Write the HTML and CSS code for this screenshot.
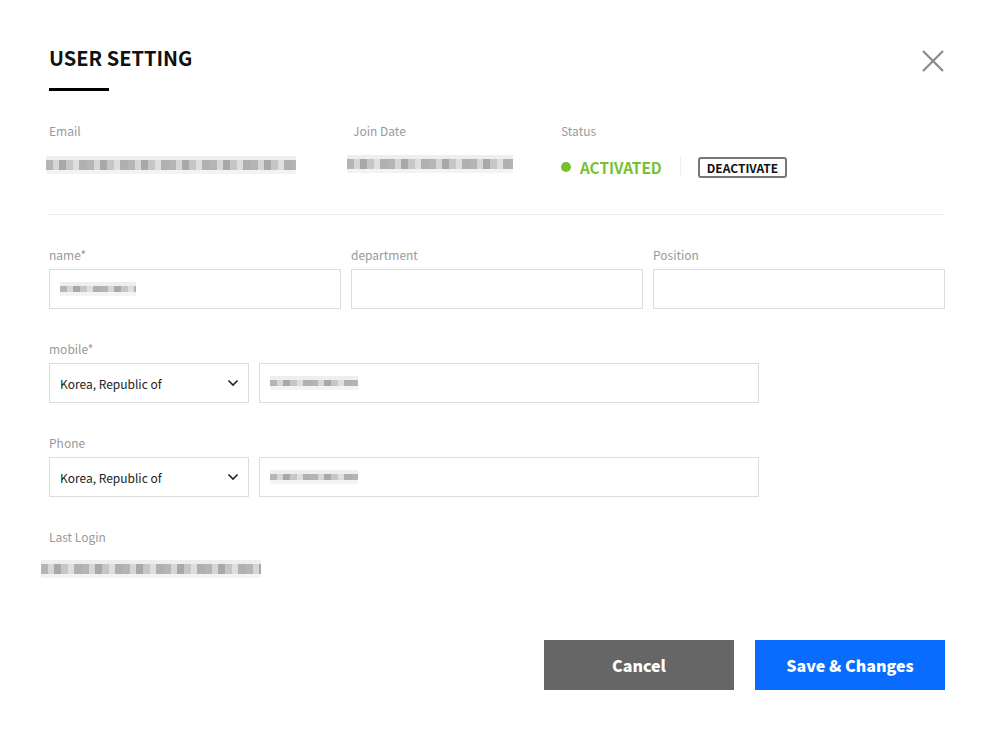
FILE: index.html
```html
<!DOCTYPE html>
<html lang="en">
<head>
<meta charset="utf-8">
<title>User Setting</title>
<link rel="stylesheet" href="styles.css">
</head>
<body>
<div class="modal">
  <div class="header">
    <div class="title-wrap">
      <h1 class="title">USER SETTING</h1>
      <div class="title-bar"></div>
    </div>
    <button class="close" aria-label="Close">
      <svg width="22" height="22" viewBox="0 0 22 22"><path d="M1 1 L21 21 M21 1 L1 21" stroke="#8a8a8a" stroke-width="2.2" fill="none"/></svg>
    </button>
  </div>

  <div class="info">
    <div class="info-col">
      <div class="label">Email</div>
      <div class="value"><span class="blur blur-email"></span></div>
    </div>
    <div class="info-col">
      <div class="label">Join Date</div>
      <div class="value"><span class="blur blur-date"></span></div>
    </div>
    <div class="info-col">
      <div class="label">Status</div>
      <div class="value status">
        <span class="dot"></span>
        <span class="activated">ACTIVATED</span>
        <span class="sep"></span>
        <button class="deactivate">DEACTIVATE</button>
      </div>
    </div>
  </div>

  <div class="divider"></div>

  <div class="field">
    <div class="grid3">
      <div>
        <div class="label">name*</div>
        <div class="input"><span class="blur blur-name"></span></div>
      </div>
      <div>
        <div class="label">department</div>
        <div class="input"></div>
      </div>
      <div>
        <div class="label">Position</div>
        <div class="input"></div>
      </div>
    </div>
  </div>

  <div class="field">
    <div class="label">mobile*</div>
    <div class="phone-row">
      <div class="select">
        <span>Korea, Republic of</span>
        <svg width="12" height="8" viewBox="0 0 12 8"><path d="M1.5 1.5 L6 6 L10.5 1.5" stroke="#222" stroke-width="1.6" fill="none"/></svg>
      </div>
      <div class="input wide"><span class="blur blur-phone"></span></div>
    </div>
  </div>

  <div class="field">
    <div class="label">Phone</div>
    <div class="phone-row">
      <div class="select">
        <span>Korea, Republic of</span>
        <svg width="12" height="8" viewBox="0 0 12 8"><path d="M1.5 1.5 L6 6 L10.5 1.5" stroke="#222" stroke-width="1.6" fill="none"/></svg>
      </div>
      <div class="input wide"><span class="blur blur-phone"></span></div>
    </div>
  </div>

  <div class="field last">
    <div class="label">Last Login</div>
    <div class="value"><span class="blur blur-login"></span></div>
  </div>

  <div class="actions">
    <button class="btn btn-cancel">Cancel</button>
    <button class="btn btn-save">Save &amp; Changes</button>
  </div>
</div>
</body>
</html>
```

FILE: styles.css
```css
* { box-sizing: border-box; }
html, body { margin: 0; padding: 0; background: #fff; }
body {
  font-family: "Noto Sans CJK KR", "Noto Sans", sans-serif;
  color: #222;
}
.modal {
  width: 995px;
  padding: 45px 50px 0 49px;
}
.header {
  display: flex;
  justify-content: space-between;
  align-items: flex-start;
}
.title {
  margin: 0;
  font-size: 20px;
  line-height: 26px;
  font-weight: 700;
  color: #111;
}
.title-bar {
  width: 60px;
  height: 3px;
  background: #000;
  margin-top: 17px;
}
.close {
  border: 0;
  background: none;
  padding: 0;
  margin-top: 5px;
  margin-right: 1px;
  width: 22px;
  height: 22px;
  display: block;
  cursor: pointer;
}
.close svg { display: block; }
.info {
  display: grid;
  grid-template-columns: 304px 208px auto;
  margin-top: 31px;
}
.label {
  font-size: 12px;
  line-height: 18px;
  color: #999;
}
.value {
  margin-top: 17px;
  height: 20px;
  display: flex;
  align-items: center;
}
.blur {
  display: block;
  height: 10px;
  margin-top: -4px;
  background:
    repeating-linear-gradient(90deg, #a9a9a9 0 7px, #cfcfcf 7px 13px, #999 13px 20px, #bdbdbd 20px 27px, #d9d9d9 27px 33px, #a3a3a3 33px 41px);
  box-shadow: 0 -4px 0 #ececec, 0 4px 0 #f1f1f1;
  opacity: 0.85;
}
.blur-email { width: 250px; margin-left: -3px; }
.blur-date { width: 166px; margin-left: -6px; margin-top: -7px; }
.blur-name { width: 76px; height: 6px; margin-top: 0; }
.blur-phone { width: 88px; height: 6px; margin-top: 0; }
.blur-login { width: 220px; margin-left: -8px; margin-top: -8px; }
.dot {
  width: 10px;
  height: 10px;
  border-radius: 50%;
  background: #76c132;
  margin-right: 9px;
}
.activated {
  font-size: 15.3px;
  font-weight: 700;
  color: #76c132;
}
.sep {
  width: 1px;
  height: 20px;
  background: #eee;
  margin: 0 17px 0 18px;
}
.deactivate {
  height: 21px;
  border: 2px solid #777;
  border-radius: 3px;
  background: #fff;
  font-family: inherit;
  font-size: 12px;
  font-weight: 700;
  color: #111;
  padding: 0 7px;
  line-height: 17px;
}
.divider {
  height: 1px;
  background: #ececec;
  margin-top: 37px;
  margin-bottom: 31px;
}
.field { margin-bottom: 31px; }
.field.last { margin-bottom: 57px; }
.grid3 {
  display: grid;
  grid-template-columns: repeat(3, 1fr);
  gap: 10px;
}
.input {
  margin-top: 5px;
  height: 40px;
  border: 1px solid #dcdcdc;
  background: #fff;
  display: flex;
  align-items: center;
  padding: 0 10px;
}
.phone-row {
  display: flex;
  gap: 10px;
  margin-top: 5px;
}
.phone-row .input { margin-top: 0; }
.select {
  width: 200px;
  height: 40px;
  border: 1px solid #dcdcdc;
  display: flex;
  align-items: center;
  justify-content: space-between;
  padding: 0 9px 0 10px;
  font-size: 12px;
  color: #222;
}
.select svg { display: block; }
.wide { width: 500px; }
.actions {
  display: flex;
  justify-content: flex-end;
  gap: 21px;
}
.btn {
  width: 190px;
  height: 50px;
  border: 0;
  font-family: inherit;
  font-size: 16px;
  font-weight: 900;
  color: #fff;
  cursor: pointer;
}
.btn-cancel { background: #666; }
.btn-save { background: #0a6cff; }
```
